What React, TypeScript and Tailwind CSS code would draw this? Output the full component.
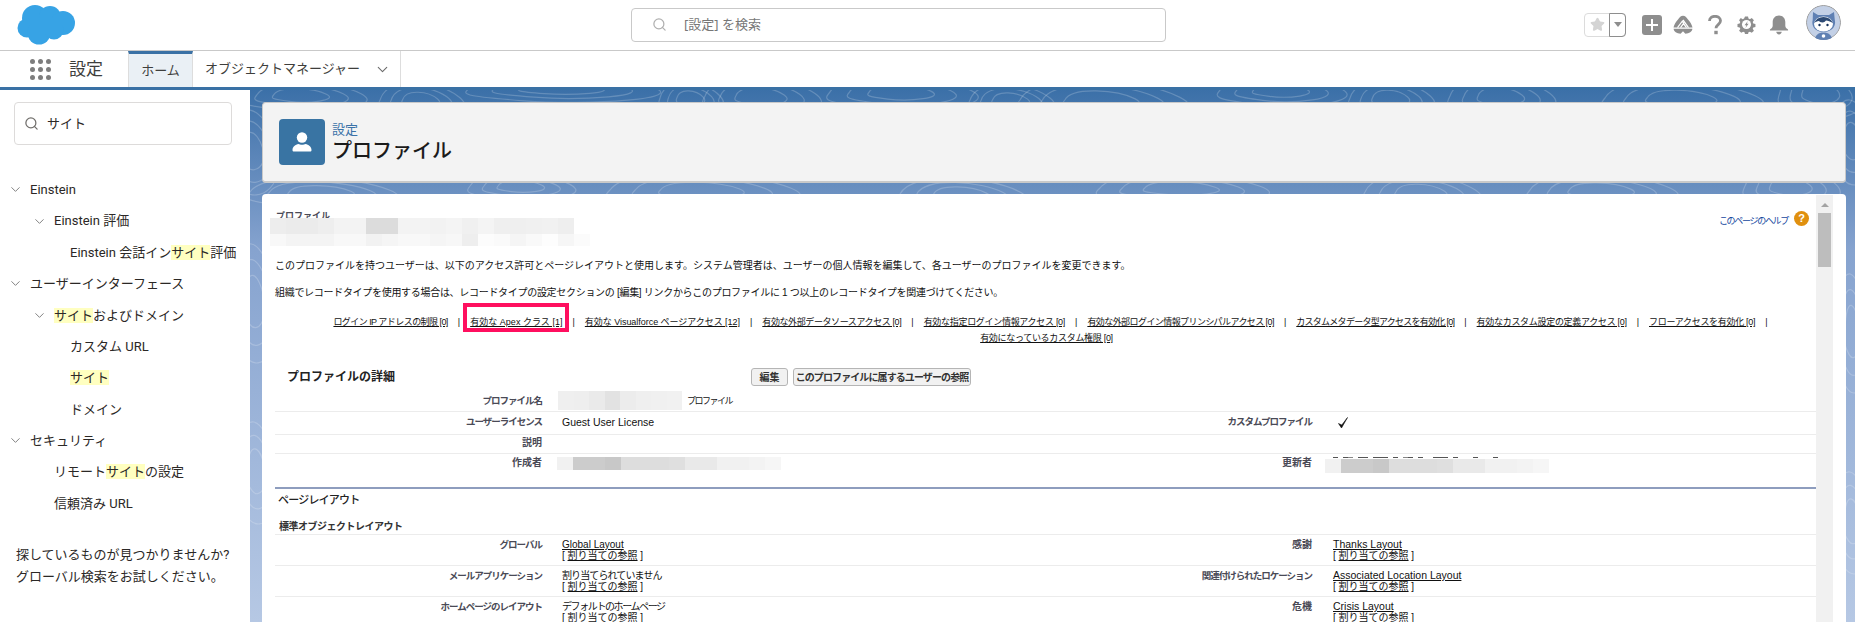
import React from "react";
import { Search, ChevronDown, Star } from "lucide-react";

const CLASSIC = "font-['Liberation_Sans','Noto_Sans_CJK_JP',sans-serif]";
const MODERN = "font-['Roboto','Noto_Sans_CJK_JP',sans-serif]";

function Mosaic({ colors, cell, className }: { colors: string[]; cell: number; className: string }) {
  return (
    <div className={"flex " + className}>
      {colors.map((c, i) => (
        <div key={i} style={{ backgroundColor: c, width: cell }} className="h-full shrink-0" />
      ))}
    </div>
  );
}

function Logo() {
  return (
    <svg width="60" height="42" viewBox="14 4 60 42" className="shrink-0">
      <g fill="#37a3e5">
        <circle cx="33" cy="18" r="13" />
        <circle cx="48" cy="17" r="11" />
        <circle cx="61" cy="23" r="12" />
        <circle cx="25" cy="28" r="9.5" />
        <circle cx="37" cy="33" r="11.5" />
        <circle cx="52" cy="30" r="9.5" />
        <rect x="28" y="18" width="32" height="16" />
      </g>
    </svg>
  );
}

function TrailheadIcon() {
  return (
    <svg width="20" height="20" viewBox="0 0 20 20">
      <path d="M10 .8C7.800.8 6.600 2.400 5 4.400 3 6.800 1 9.400.5 12.600h19C19 9.400 17 6.800 15 4.400 13.400 2.400 12.200.8 10 .8Z" fill="#8e8e8e" />
      <path d="M4.500 12.600 9.300 6.200l1.800 2.400M7.500 12.600l3-4 3 4M10 4.800l5.500 7.800" fill="none" stroke="#fff" strokeWidth="1.200" />
      <path d="M.6 13.800h18.800c-.2 2.800-3.200 4.600-7 4.900L10 16.200l-2.400 2.500c-3.800-.3-6.800-2.100-7-4.900Z" fill="#8e8e8e" />
    </svg>
  );
}

function GearIcon() {
  return (
    <svg width="19" height="19" viewBox="0 0 18 18">
      <path
        d="M7.4.4h3.2l.5 2.3 1.5.7 2-1.3 2.3 2.3-1.3 2 .6 1.5 2.3.5v3.2l-2.3.5-.6 1.500 1.300 2-2.300 2.300-2-1.300-1.500.6-.5 2.100H7.400l-.5-2.100-1.500-.6-2 1.300-2.300-2.300 1.300-2-.7-1.500-2.300-.5V8.400l2.300-.5.700-1.500-1.300-2L2.900 2.100l2 1.300 1.500-.7Z"
        fill="#8e8e8e"
        transform="translate(1 1) scale(.89)"
      />
      <circle cx="9" cy="9" r="4.300" fill="#fff" />
      <path d="M10.200 5.800 7.200 9.600h1.700L8 12.200l3-3.800H9.300Z" fill="#8e8e8e" />
    </svg>
  );
}

function BellIcon() {
  return (
    <svg width="20" height="20" viewBox="0 0 20 20">
      <path d="M10 .6c-3.800 0-6.300 2.900-6.300 6.500v3.700c0 1.500-1 2.500-2.200 3.300-.4.300-.6.600-.6 1v.5h18.200v-.5c0-.4-.2-.7-.6-1-1.200-.8-2.200-1.800-2.200-3.300V7.100C16.300 3.500 13.800.6 10 .6Z" fill="#8e8e8e" />
      <path d="M7.300 16.800h5.400c0 1.500-1.200 2.600-2.700 2.600s-2.700-1.100-2.700-2.600Z" fill="#8e8e8e" />
    </svg>
  );
}

function Avatar() {
  return (
    <svg width="35" height="35" viewBox="0 0 35 35" className="rounded-full">
      <circle cx="17.500" cy="17.500" r="17" fill="#c3d0e6" stroke="#9a9a9a" />
      <path d="M7 7l5 3h11l5-3 .8 8c1.500 5-2 12-11.300 12S5.200 20 6.700 15Z" fill="#5f80b3" />
      <ellipse cx="17.500" cy="19" rx="9.500" ry="7.500" fill="#fff" />
      <path d="M8 18c2-4 5-6 9.500-6s7.500 2 9.500 6c-3-1.500-5-2.500-7-2.500-1 1-2 2-3.500 2-2 0-3-1-3.500-1.500-2 0-3.500 1-5 2Z" fill="#2d4a74" />
      <circle cx="13.500" cy="20" r="1.200" fill="#16325c" />
      <circle cx="21.500" cy="20" r="1.200" fill="#16325c" />
      <path d="M9 35c0-5 3.500-7.500 8.500-7.500S26 30 26 35Z" fill="#5f80b3" />
      <circle cx="17.500" cy="31" r="1.800" fill="#fff" />
    </svg>
  );
}

function TopBar() {
  return (
    <header className="h-[51px] shrink-0 bg-white border-b border-[#c9c9c9] flex items-center relative">
      <div className="w-[631px] shrink-0 pl-4">
        <Logo />
      </div>
      <div className="w-[535px] h-[34px] shrink-0 border border-[#c9c9c9] rounded flex items-center pl-[20px] -mt-[1px]">
        <Search size={15} strokeWidth={2} className="text-[#b0b0b0]" />
        <span className="ml-[17px] text-[13px] text-[#777] font-['Noto_Sans','Noto_Sans_CJK_JP',sans-serif]">[設定] を検索</span>
      </div>
      <div className="flex-1 flex items-center pl-[418px]">
        <div className="w-[42px] h-[24px] flex rounded border border-[#dcdcdc] -mt-[1px]">
          <div className="w-[24px] flex items-center justify-center">
            <Star size={15} fill="#d4d4d4" stroke="#d4d4d4" />
          </div>
          <div className="flex-1 border border-[#8e8e8e] -my-[1px] -mr-[1px] rounded-r flex items-center justify-center">
            <div className="w-0 h-0 border-x-[4px] border-x-transparent border-t-[5px] border-t-[#8e8e8e]" />
          </div>
        </div>
        <div className="ml-[16px] w-[20px] h-[20px] bg-[#8e8e8e] rounded-[3px] flex items-center justify-center -mt-[1px]">
          <svg width="12" height="12" viewBox="0 0 12 12">
            <path d="M6 0v12M0 6h12" stroke="#fff" strokeWidth="2" />
          </svg>
        </div>
        <div className="ml-[11px] -mt-[1px]">
          <TrailheadIcon />
        </div>
        <div className="ml-[12px] w-[20px] flex justify-center -mt-[1px]">
          <svg width="14" height="20" viewBox="0 0 14 20">
            <path d="M1.500 6C1.500 3 3.800 1.300 7 1.300S12.500 3 12.500 5.800c0 3.700-4.500 3.900-4.500 7.400" fill="none" stroke="#8e8e8e" strokeWidth="2.800" />
            <rect x="6.300" y="15.800" width="3.400" height="3.400" fill="#8e8e8e" />
          </svg>
        </div>
        <div className="ml-[12px] -mt-[1px]">
          <GearIcon />
        </div>
        <div className="ml-[13px] -mt-[1px]">
          <BellIcon />
        </div>
        <div className="ml-[17px] -mt-[6px]">
          <Avatar />
        </div>
      </div>
    </header>
  );
}

function NavBar() {
  return (
    <nav className="h-[39px] shrink-0 bg-white border-b-[3px] border-[#3a71a5] flex font-['Noto_Sans','Noto_Sans_CJK_JP',sans-serif]">
      <div className="w-[128px] flex items-center pl-[30px]">
        <div className="grid grid-cols-3 gap-[3px]">
          {Array.from({ length: 9 }).map((_, i) => (
            <div key={i} className="w-[5px] h-[5px] rounded-full bg-[#7d7d7d]" />
          ))}
        </div>
        <span className="ml-[18px] text-[17px] text-[#3e3e3c]">設定</span>
      </div>
      <div className="w-[65px] bg-[#eaf0f5] border-t-[3px] border-t-[#3a71a5] border-x border-x-[#dddddd] flex items-center justify-center text-[13px] text-[#3e3e3c]">ホーム</div>
      <div className="w-[208px] border-r border-[#dddddd] flex items-center pl-[12px] text-[13px] text-[#3e3e3c]">
        <span>オブジェクトマネージャー</span>
        <ChevronDown size={17} strokeWidth={1.500} className="ml-[14px] text-[#6b6b6b]" />
      </div>
    </nav>
  );
}

function Hl({ children }: { children: React.ReactNode }) {
  return <span className="bg-[#ffffc0]">{children}</span>;
}

function TreeRow({ level, open, children }: { level: 0 | 1 | 2 | 3; open?: boolean; children: React.ReactNode }) {
  const pad = level === 0 ? "pl-[8px]" : level === 1 ? "pl-[32px]" : level === 2 ? "pl-[54px]" : "pl-[70px]";
  return (
    <div className={"h-[31.400px] flex items-center whitespace-nowrap " + pad}>
      {open && <ChevronDown size={15} strokeWidth={1.500} className="text-[#7a7a7a] mr-[7px] shrink-0" />}
      <span>{children}</span>
    </div>
  );
}

function Sidebar() {
  return (
    <aside className={"w-[250px] shrink-0 bg-white text-[13px] text-[#2b2826] " + MODERN}>
      <div className="mt-[12px] ml-[14px] w-[218px] h-[43px] border border-[#dddbda] rounded flex items-center pl-[9px]">
        <Search size={15} strokeWidth={2} className="text-[#706e6b]" />
        <span className="ml-[8px]">サイト</span>
      </div>
      <div className="mt-[29px]">
        <TreeRow level={0} open>Einstein</TreeRow>
        <TreeRow level={1} open>Einstein 評価</TreeRow>
        <TreeRow level={3}>Einstein 会話イン<Hl>サイト</Hl>評価</TreeRow>
        <TreeRow level={0} open>ユーザーインターフェース</TreeRow>
        <TreeRow level={1} open><Hl>サイト</Hl>およびドメイン</TreeRow>
        <TreeRow level={3}>カスタム URL</TreeRow>
        <TreeRow level={3}><Hl>サイト</Hl></TreeRow>
        <TreeRow level={3}>ドメイン</TreeRow>
        <TreeRow level={0} open>セキュリティ</TreeRow>
        <TreeRow level={2}>リモート<Hl>サイト</Hl>の設定</TreeRow>
        <TreeRow level={2}>信頼済み URL</TreeRow>
      </div>
      <div className="mt-[25px] ml-[16px] leading-[22px] whitespace-nowrap">
        探しているものが見つかりませんか?
        <br />
        グローバル検索をお試しください。
      </div>
    </aside>
  );
}

function Contours() {
  const paths: string[] = [];
  const seeds = [
    [300, 95, 60, 18], [420, 100, 40, 22], [560, 88, 90, 16], [690, 98, 30, 20], [760, 96, 55, 24], [900, 92, 70, 20], [1010, 100, 40, 20],
    [1100, 100, 80, 26], [1280, 90, 60, 18], [1390, 98, 40, 22], [1500, 96, 50, 24], [1680, 98, 75, 22], [1820, 92, 40, 30],
    [320, 192, 70, 18], [520, 186, 50, 16], [700, 190, 90, 22], [960, 194, 60, 20], [1180, 188, 80, 18],
    [1420, 192, 55, 22], [1600, 190, 70, 20], [1790, 186, 45, 24], [252, 150, 24, 50], [254, 300, 22, 70],
    [256, 470, 20, 60], [1852, 140, 20, 50], [1852, 330, 16, 70], [1852, 520, 18, 60],
  ];
  seeds.forEach(([x, y, a, b]) => {
    [1, 0.72, 0.44].forEach((k) => {
      const rx = a * k;
      const ry = b * k;
      paths.push(
        `M${x - rx} ${y}C${x - rx * 0.8} ${y - ry * 1.2} ${x + rx * 0.5} ${y - ry * 0.9} ${x + rx} ${y - ry * 0.1}S${x + rx * 0.3} ${y + ry * 1.1} ${x - rx * 0.4} ${y + ry * 0.8}S${x - rx * 1.1} ${y + ry * 0.4} ${x - rx} ${y}Z`
      );
    });
  });
  return (
    <svg className="absolute inset-0 w-full h-full" viewBox="250 90 1605 532" preserveAspectRatio="none">
      {paths.map((d, i) => (
        <path key={i} d={d} fill="none" stroke="#ffffff" strokeOpacity="0.2" strokeWidth="1.200" />
      ))}
    </svg>
  );
}

function PageHeader() {
  return (
    <div className={"relative h-[81px] shrink-0 bg-[#f3f3f3] border border-[#c9c9c9] border-b-2 rounded flex items-center pl-[16px] " + MODERN}>
      <div className="w-[46px] h-[46px] rounded bg-[#3974a3] flex items-center justify-center">
        <svg width="24" height="24" viewBox="0 0 24 24">
          <circle cx="12" cy="7.500" r="5.200" fill="#fff" />
          <path d="M2.500 20c0-3.500 3-5.500 6-6 1.500 1 5.500 1 7 0 3 .5 6 2.500 6 6 0 1-.5 1.500-1.500 1.500H4c-1 0-1.500-.5-1.500-1.500Z" fill="#fff" />
        </svg>
      </div>
      <div className="ml-[7px] mt-[1px]">
        <div className="text-[13px] leading-[17px] text-[#3a72a8]">設定</div>
        <div className="text-[20px] leading-[26px] font-medium text-[#1b1b1b]">プロファイル</div>
      </div>
    </div>
  );
}

const LINKS_1: { t: string; c: string; hl?: boolean }[] = [
  { t: "ログイン IP アドレスの制限 [0]", c: "tracking-[-0.55px]" },
  { t: "有効な Apex クラス [1]", c: "tracking-[0.03px]", hl: true },
  { t: "有効な Visualforce ページアクセス [12]", c: "tracking-[-0.04px]" },
  { t: "有効な外部データソースアクセス [0]", c: "tracking-[-0.4px]" },
  { t: "有効な指定ログイン情報アクセス [0]", c: "tracking-[-0.3px]" },
  { t: "有効な外部ログイン情報プリンシパルアクセス [0]", c: "tracking-[-0.57px]" },
  { t: "カスタムメタデータ型アクセスを有効化 [0]", c: "tracking-[-0.73px]" },
  { t: "有効なカスタム設定の定義アクセス [0]", c: "tracking-[-0.3px]" },
  { t: "フローアクセスを有効化 [0]", c: "tracking-[-0.3px]" },
];

function AccessLinks() {
  return (
    <div className="text-[9px] leading-[14px] text-[#111]">
      <div className="flex justify-center items-center gap-[10px] whitespace-nowrap mt-[15px] pl-[10px]">
        {LINKS_1.map((l) => (
          <React.Fragment key={l.t}>
            <span className={"relative underline " + l.c}>
              {l.t}
              {l.hl && <span className="absolute -left-[7px] -right-[6px] -top-[12px] bottom-[-3px] border-[4px] border-[#ff0f5f]" />}
            </span>
            <span>|</span>
          </React.Fragment>
        ))}
      </div>
      <div className="text-center underline mt-[2px] pl-[2px] tracking-[-0.3px]">有効になっているカスタム権限 [0]</div>
    </div>
  );
}

function Label({ tight, children }: { tight?: boolean; children?: React.ReactNode }) {
  return (
    <div className={"text-right font-bold text-[#4a4a56] whitespace-nowrap " + (tight ? "text-[9.500px] tracking-[-1px]" : "")}>{children}</div>
  );
}

const ROWCOLS = "grid grid-cols-[267px_508px_262px_1fr] border-b border-[#ececec] leading-[14px]";

function LayoutValue({ name, nameClass, indent }: { name: string; nameClass: string; indent: string }) {
  return (
    <div className={indent + " leading-[11px] whitespace-nowrap text-[#111]"}>
      <div><span className={nameClass}>{name}</span></div>
      <div>[ <span className="underline">割り当ての参照</span> ]</div>
    </div>
  );
}

function LayoutRow({ a, b, bClass, c, d, tightC = true }: { a: string; b: string; bClass: string; c: string; d: string; tightC?: boolean }) {
  return (
    <div className="grid grid-cols-[267px_508px_262px_1fr] h-[31px] border-b border-[#ececec] pt-[4px] leading-[11px]">
      <Label tight>{a}</Label>
      <LayoutValue name={b} nameClass={bClass} indent="pl-[20px]" />
      <Label tight={tightC}>{c}</Label>
      <LayoutValue name={d} nameClass="underline text-[10.500px]" indent="pl-[21px]" />
    </div>
  );
}

const M1 = ["#ededed","#ebebeb","#ebebeb","#eeeeee","#f3f3f3","#f3f3f3","#dcdcdc","#dcdcdc","#f3f3f3","#f3f3f3","#f2f2f2","#f4f4f4","#f0f0f0","#f4f4f4","#efefef","#efefef","#f0f0f0","#f1f1f1","#eeeeee"];
const M2 = ["#f8f8f8","#f4f4f4","#f4f4f4","#f4f4f4","#f8f8f8","#f8f8f8","#f2f2f2","#f5f5f5","#f8f8f8","#f8f8f8","#f5f5f5","#f7f7f7","#eeeeee","#fcfcfc","#fafafa","#f5f5f5","#f9f9f9","#fdfdfd","#f6f6f6","#fbfbfb"];
const M3 = ["#efefef","#eeeeee","#eaeaea","#e2e2e2","#ececec","#efefef","#f0f0f0","#f1f1f1"];
const M4 = ["#f1f1f1","#cccccc","#cccccc","#c8c8c8","#dddddd","#dddddd","#dddddd","#dfdfdf","#e9e9e9","#e9e9e9","#f1f1f1","#f1f1f1","#f3f3f3","#f6f6f6"];
const TICKS = ["#555","#fff","#555","#888","#fff","#555","#555","#fff","#555","#555","#555","#fff","#555","#fff","#888","#555","#fff","#555","#fff","#fff","#555","#555","#555","#fff","#555","#fff","#fff","#fff","#555","#fff","#fff","#fff","#555"];

function ClassicPanel() {
  return (
    <div className={"flex-1 min-w-0 pl-[13px] text-[10px] text-[#111] " + CLASSIC}>
      <div className="relative h-[51px] -ml-[5px] pt-[15px]">
        <div className="h-[8px] overflow-hidden pl-[6px] text-[9px] leading-[12px] font-bold text-[#4a4a56]">プロファイル</div>
        <Mosaic colors={M1} cell={16} className="h-[16px]" />
        <Mosaic colors={M2} cell={16} className="h-[12px]" />
        <div className="absolute right-[7px] top-[19px] flex items-center gap-[6px] text-[#15479e]">
          <span className="text-[9px] tracking-[-1.300px] leading-[14px]">このページのヘルプ</span>
          <span className="w-[15px] h-[15px] -mt-[6px] rounded-full bg-[#e0900f] text-white text-[11px] leading-[15px] font-bold text-center">?</span>
        </div>
      </div>
      <p className="leading-[14px] mt-[13px] whitespace-nowrap">このプロファイルを持つユーザーは、以下のアクセス許可とページレイアウトと使用します。システム管理者は、ユーザーの個人情報を編集して、各ユーザーのプロファイルを変更できます。</p>
      <p className="leading-[14px] mt-[13px] whitespace-nowrap tracking-[-0.3px]">組織でレコードタイプを使用する場合は、レコードタイプの設定セクションの [編集] リンクからこのプロファイルに 1 つ以上のレコードタイプを関連づけてください。</p>
      <AccessLinks />

      <div className="flex items-center h-[18px] mt-[23px]">
        <div className="w-[476px] pl-[12px] text-[12px] font-bold text-[#222]">プロファイルの詳細</div>
        <button className="w-[37px] h-[18px] border border-[#b5b5b5] rounded-[3px] bg-[#f1f1f1] font-bold text-[#333] text-[10px]">編集</button>
        <button className="w-[178px] h-[18px] ml-[5px] border border-[#b5b5b5] rounded-[3px] bg-[#f1f1f1] font-bold text-[#333] text-[10px] tracking-[-0.9px] whitespace-nowrap">このプロファイルに属するユーザーの参照</button>
      </div>

      <div className="mt-[4px]">
        <div className={ROWCOLS + " h-[22px] items-center"}>
          <Label tight>プロファイル名</Label>
          <div className="pl-[16px] flex items-center">
            <Mosaic colors={M3} cell={15.500} className="h-[19px]" />
            <span className="ml-[5px] text-[9px] tracking-[-1.500px]">プロファイル</span>
          </div>
          <div />
          <div />
        </div>
        <div className={ROWCOLS + " h-[23px] pt-[3px]"}>
          <Label tight>ユーザーライセンス</Label>
          <div className="pl-[20px] text-[10.500px]">Guest User License</div>
          <Label tight>カスタムプロファイル</Label>
          <div className="pl-[24px] pt-[1px]">
            <svg width="14" height="14" viewBox="0 0 14 14">
              <path d="M2.500 7.500 5.500 12 11.500 1.500 5.800 9 Z" fill="#111" stroke="#111" strokeWidth=".6" />
            </svg>
          </div>
        </div>
        <div className={ROWCOLS + " h-[19px] pt-[1px]"}>
          <Label>説明</Label>
          <div />
          <div />
          <div />
        </div>
        <div className="grid grid-cols-[267px_508px_262px_1fr] h-[33px] pt-[2px] leading-[14px]">
          <Label>作成者</Label>
          <div className="pl-[15px]">
            <Mosaic colors={M4} cell={16} className="h-[13px] mt-[1px]" />
          </div>
          <Label>更新者</Label>
          <div className="pl-[13px]">
            <Mosaic colors={TICKS} cell={5} className="h-[1px] ml-[8px] mt-[1px]" />
            <Mosaic colors={M4} cell={16} className="h-[14px] mt-[1px]" />
          </div>
        </div>
      </div>

      <div className="border-t-2 border-[#8e9dbe]">
        <div className="pl-[3px] mt-[4px] text-[11px] tracking-[-0.8px] leading-[14px] font-medium text-[#222]">ページレイアウト</div>
        <div className="pl-[4px] mt-[13px] leading-[14px] font-bold text-[#333] border-b border-[#ececec] tracking-[-0.5px]">標準オブジェクトレイアウト</div>
        <LayoutRow a="グローバル" b="Global Layout" bClass="underline" c="感謝" tightC={false} d="Thanks Layout" />
        <LayoutRow a="メールアプリケーション" b="割り当てられていません" bClass="tracking-[-0.9px]" c="関連付けられたロケーション" d="Associated Location Layout" />
        <LayoutRow a="ホームページのレイアウト" b="デフォルトのホームページ" bClass="tracking-[-1.400px]" c="危機" tightC={false} d="Crisis Layout" />
      </div>
    </div>
  );
}

function Scrollbar() {
  return (
    <div className="w-[17px] shrink-0 bg-[#f1f1f1] pt-[8px] flex flex-col items-center">
      <div className="w-0 h-0 border-x-[4px] border-x-transparent border-b-[4px] border-b-[#a3a3a3]" />
      <div className="mt-[6px] w-[13px] h-[54px] bg-[#bdbdbd]" />
    </div>
  );
}

export default function App() {
  return (
    <div className="w-[1855px] h-[622px] overflow-hidden flex flex-col bg-white">
      <TopBar />
      <NavBar />
      <div className="flex-1 min-h-0 flex">
        <Sidebar />
        <main className="relative flex-1 min-w-0 bg-linear-to-b from-[#3b70a8] via-[#86a3cf] via-30% to-[#b6c8e4] pt-[12px] pl-[12px] pr-[9px] flex flex-col">
          <Contours />
          <div className="relative flex-1 min-h-0 flex flex-col">
            <PageHeader />
            <div className="mt-[11px] flex-1 min-h-0 bg-white rounded-t overflow-hidden flex pr-[13px] pt-[1px]">
              <ClassicPanel />
              <Scrollbar />
            </div>
          </div>
        </main>
      </div>
    </div>
  );
}
